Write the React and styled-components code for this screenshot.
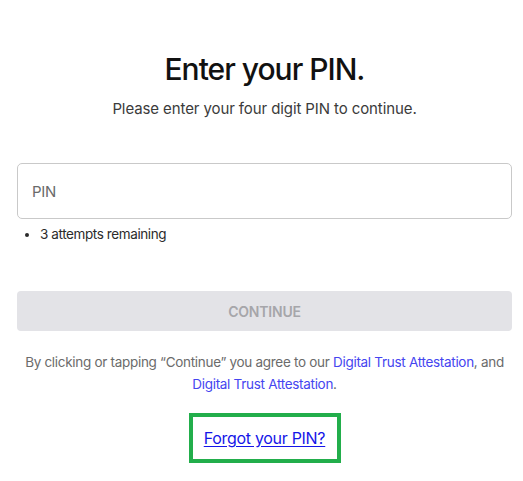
import React from 'react'
import styled, { createGlobalStyle } from 'styled-components'

const GlobalStyle = createGlobalStyle`
  body {
    margin: 0;
    background: #ffffff;
    font-family: Inter, "Liberation Sans", Arial, sans-serif;
  }
`

const Page = styled.main`
  display: flex;
  flex-direction: column;
  padding: 50px 11px 0 17px;
`

const Title = styled.h1`
  margin: 0;
  text-align: center;
  font-size: 30px;
  font-weight: 500;
  letter-spacing: -1px;
  line-height: 38px;
  color: #111111;
`

const Subtitle = styled.p`
  margin: 11px 0 0;
  text-align: center;
  font-size: 15px;
  letter-spacing: -0.1px;
  line-height: 20px;
  color: #3b3b3b;
`

const PinInput = styled.input`
  box-sizing: border-box;
  margin-top: 44px;
  width: 100%;
  height: 56px;
  padding: 0 14px;
  border: 1px solid #c9c9c9;
  border-radius: 5px;
  font-family: inherit;
  font-size: 15px;
  letter-spacing: -0.3px;
  color: #222;
  outline: none;

  &::placeholder {
    color: #6a6a6a;
  }
`

const Hints = styled.ul`
  margin: 6px 0 0;
  padding-left: 23px;
  font-size: 13.5px;
  letter-spacing: -0.4px;
  line-height: 18px;
  color: #2b2b2b;
`

const ContinueButton = styled.button`
  margin-top: 48px;
  width: 100%;
  height: 40px;
  border: none;
  border-radius: 4px;
  background: #e3e3e7;
  color: #a6a6aa;
  font-family: inherit;
  font-size: 14px;
  font-weight: 600;
  letter-spacing: -0.2px;
`

const Terms = styled.p`
  margin: 20px 0 0;
  text-align: center;
  font-size: 13.5px;
  letter-spacing: -0.3px;
  line-height: 22px;
  color: #6b6b6b;
`

const TermsLink = styled.a`
  color: #4545f0;
  text-decoration: none;
`

const ForgotRow = styled.div`
  display: flex;
  justify-content: center;
  margin-top: 18px;
`

const ForgotBox = styled.div`
  box-sizing: border-box;
  width: 152px;
  height: 50px;
  border: 4px solid #22ae4b;
  display: flex;
  align-items: center;
  justify-content: center;
`

const ForgotLink = styled.a`
  color: #1515e8;
  font-size: 16px;
  letter-spacing: -0.3px;
  text-decoration: underline;
  text-underline-offset: 2px;
`

export default function App() {
  return (
    <>
      <GlobalStyle />
      <Page>
        <Title>Enter your PIN.</Title>
        <Subtitle>Please enter your four digit PIN to continue.</Subtitle>
        <PinInput placeholder="PIN" inputMode="numeric" />
        <Hints>
          <li>3 attempts remaining</li>
        </Hints>
        <ContinueButton disabled>CONTINUE</ContinueButton>
        <Terms>
          By clicking or tapping “Continue” you agree to our{' '}
          <TermsLink href="#">Digital Trust Attestation</TermsLink>, and{' '}
          <TermsLink href="#">Digital Trust Attestation</TermsLink>.
        </Terms>
        <ForgotRow>
          <ForgotBox>
            <ForgotLink href="#">Forgot your PIN?</ForgotLink>
          </ForgotBox>
        </ForgotRow>
      </Page>
    </>
  )
}
